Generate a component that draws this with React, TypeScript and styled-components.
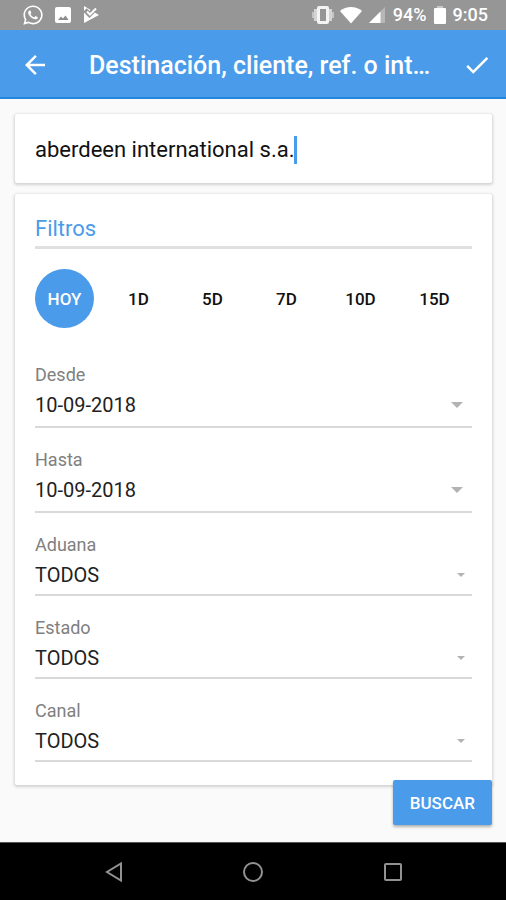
import React, { useState } from "react";
import styled, { createGlobalStyle } from "styled-components";
import { FaWhatsapp } from "react-icons/fa";
import { MdArrowBack, MdCheck } from "react-icons/md";

const BLUE = "#4a9bea";

const GlobalStyle = createGlobalStyle`
  *, *::before, *::after { box-sizing: border-box; }
  body { margin: 0; background: #fafafa; font-family: Roboto, "Noto Sans", sans-serif; }
  button, input, select { font: inherit; color: inherit; margin: 0; padding: 0; border: 0; background: none; outline: none; }
  button { cursor: pointer; }
  svg { display: block; flex: none; }
`;

const Screen = styled.div`
  display: flex;
  flex-direction: column;
  min-height: 100vh;
`;

const StatusBar = styled.div`
  display: flex;
  align-items: center;
  justify-content: space-between;
  height: 30px;
  padding: 0 18px 0 22px;
  background: #969696;
  color: #fff;
  font-size: 18px;
  font-weight: 500;
`;

const StatusGroup = styled.div<{ $gap: number }>`
  display: flex;
  align-items: center;
  gap: ${(p) => p.$gap}px;
`;

const StatusText = styled.span`
  line-height: 32px;
`;

const AppBar = styled.header`
  display: flex;
  align-items: center;
  height: 69px;
  padding: 2px 14px 0 20px;
  background: ${BLUE};
  border-bottom: 2px solid #2288dc;
  color: #fff;
`;

const Title = styled.h1`
  flex: 1;
  min-width: 0;
  margin: 0 24px 0 39px;
  padding-top: 2px;
  overflow: hidden;
  white-space: nowrap;
  text-overflow: ellipsis;
  font-size: 25px;
  font-weight: 500;
  line-height: 36px;
`;

const IconButton = styled.button`
  display: flex;
  font-size: 30px;
  color: #fff;
`;

const Content = styled.main`
  display: flex;
  flex: 1;
  flex-direction: column;
  gap: 11px;
  padding: 15px 14px 16px 15px;
`;

const Card = styled.section`
  padding: 0 20px;
  background: #fff;
  border-radius: 2px;
  box-shadow: 0 1px 3px 1px rgba(0, 0, 0, 0.16);
`;

const SearchBox = styled.label`
  display: flex;
  align-items: center;
  height: 69px;
  padding-top: 2px;
`;

const SearchInput = styled.input`
  field-sizing: content;
  min-width: 1px;
  max-width: 100%;
  font-size: 22px;
  line-height: 32px;
  color: #111;
  caret-color: transparent;
`;

const Caret = styled.span`
  width: 3px;
  height: 28px;
  background: ${BLUE};
`;

const CardTitle = styled.h2`
  margin: 0 0 20px;
  padding: 19px 0 1px;
  border-bottom: 3px solid #e0e0e0;
  color: ${BLUE};
  font-size: 22px;
  font-weight: 400;
  line-height: 32px;
`;

const Days = styled.div`
  display: flex;
  gap: 15px;
  margin-bottom: 35px;
`;

const DayButton = styled.button<{ $active: boolean }>`
  width: 59px;
  height: 59px;
  border-radius: 50%;
  background: ${(p) => (p.$active ? BLUE : "transparent")};
  color: ${(p) => (p.$active ? "#fff" : "#111")};
  font-size: 17px;
  font-weight: 500;
`;

const Fields = styled.div`
  display: flex;
  flex-direction: column;
  gap: 20px;
  padding-bottom: 23px;
`;

const Field = styled.label<{ $date: boolean }>`
  display: grid;
  row-gap: 6px;
  align-items: center;
  padding-bottom: ${(p) => (p.$date ? 9 : 7)}px;
  border-bottom: 2px solid #d9d9d9;

  svg {
    grid-area: 2 / 1;
    justify-self: end;
    margin-right: ${(p) => (p.$date ? 9 : 7)}px;
    pointer-events: none;
  }
`;

const FieldName = styled.span`
  color: #808080;
  font-size: 18px;
  line-height: 24px;
`;

const FieldSelect = styled.select`
  grid-area: 2 / 1;
  width: 100%;
  height: 24px;
  appearance: none;
  color: #222;
  font-size: 20px;
  line-height: 24px;
`;

const SearchButton = styled.button`
  align-self: flex-end;
  height: 45px;
  margin-top: -16px;
  padding: 0 17px;
  border-radius: 2px;
  background: ${BLUE};
  box-shadow: 0 2px 3px rgba(0, 0, 0, 0.3);
  color: #fff;
  font-size: 17px;
  font-weight: 500;
`;

const NavBar = styled.nav`
  display: flex;
  align-items: center;
  justify-content: space-between;
  height: 58px;
  padding: 0 104px;
  background: #000;
  border-top: 1px solid #555;
`;

const NavButton = styled.button`
  display: flex;
`;

const VibrateIcon = () => (
  <svg width="22" height="20" viewBox="0 0 22 20">
    <path d="M1 7v6M21 7v6" stroke="#c4c4c4" strokeWidth="2" />
    <path d="M3.500 4v12M18.500 4v12" stroke="#d4d4d4" strokeWidth="3" />
    <path
      fillRule="evenodd"
      d="M7 1h8A2 2 0 0 1 17 3v14a2 2 0 0 1-2 2H7a2 2 0 0 1-2-2V3a2 2 0 0 1 2-2ZM8 4v12h6V4Z"
      fill="#f4f4f4"
    />
  </svg>
);

const PictureIcon = () => (
  <svg width="16" height="16" viewBox="0 0 16 16">
    <rect width="16" height="16" rx="2" fill="#fff" />
    <path d="M3 13 6 9.500 8 11.500 10.500 8.500 13.500 13Z" fill="#8c8c8c" />
  </svg>
);

const PlayCheckIcon = () => (
  <svg width="18" height="18" viewBox="0 0 18 18">
    <path d="M2 0 17 9 2 17Z" fill="#fff" />
    <path d="M3 4 7.500 8.500 14 2" fill="none" stroke="#969696" strokeWidth="5" />
    <path d="M5 5.500 8 8.500 14 2.500" fill="none" stroke="#fff" strokeWidth="2" />
  </svg>
);

const WifiIcon = () => (
  <svg width="22" height="18" viewBox="0 0 22 18">
    <path d="M0 5C6-.2 16-.2 22 5L11 17.500Z" fill="#fff" />
  </svg>
);

const SignalIcon = () => (
  <svg width="18" height="17" viewBox="0 0 18 17">
    <path d="M17 0V16H1Z" fill="#b7b7b7" />
    <path d="M12.500 4.500V16H1Z" fill="#fff" />
  </svg>
);

const BatteryIcon = () => (
  <svg width="12" height="18" viewBox="0 0 12 18">
    <path d="M3.500 0h5v2H11a1 1 0 0 1 1 1v14a1 1 0 0 1-1 1H1a1 1 0 0 1-1-1V3a1 1 0 0 1 1-1h2.500Z" fill="#fff" />
    <path d="M3.500 0h5v2h-5Z" fill="#c8c8c8" />
  </svg>
);

const ArrowIcon = ({ width }: { width: number }) => (
  <svg width={width} height={width / 2} viewBox="0 0 12 6">
    <path d="M0 0H12L6 6Z" fill="#b3b3b3" />
  </svg>
);

const days = ["HOY", "1D", "5D", "7D", "10D", "15D"];

const fields = [
  { name: "Desde", value: "10-09-2018", date: true },
  { name: "Hasta", value: "10-09-2018", date: true },
  { name: "Aduana", value: "TODOS", date: false },
  { name: "Estado", value: "TODOS", date: false },
  { name: "Canal", value: "TODOS", date: false },
];

export default function App() {
  const [query, setQuery] = useState("aberdeen international s.a.");
  const [day, setDay] = useState("HOY");

  return (
    <Screen>
      <GlobalStyle />
      <StatusBar>
        <StatusGroup $gap={11}>
          <FaWhatsapp size={22} />
          <PictureIcon />
          <PlayCheckIcon />
        </StatusGroup>
        <StatusGroup $gap={7}>
          <StatusGroup $gap={6}>
            <VibrateIcon />
            <WifiIcon />
            <SignalIcon />
          </StatusGroup>
          <StatusText>94%</StatusText>
          <BatteryIcon />
          <StatusText>9:05</StatusText>
        </StatusGroup>
      </StatusBar>
      <AppBar>
        <IconButton aria-label="Volver">
          <MdArrowBack />
        </IconButton>
        <Title>Destinación, cliente, ref. o int…</Title>
        <IconButton aria-label="Aceptar">
          <MdCheck />
        </IconButton>
      </AppBar>
      <Content>
        <Card>
          <SearchBox>
            <SearchInput
              type="text"
              aria-label="Destinación, cliente, referencia"
              value={query}
              onChange={(e) => setQuery(e.target.value)}
            />
            <Caret />
          </SearchBox>
        </Card>
        <Card>
          <CardTitle>Filtros</CardTitle>
          <Days>
            {days.map((d) => (
              <DayButton key={d} $active={d === day} aria-pressed={d === day} onClick={() => setDay(d)}>
                {d}
              </DayButton>
            ))}
          </Days>
          <Fields>
            {fields.map((f) => (
              <Field key={f.name} $date={f.date}>
                <FieldName>{f.name}</FieldName>
                <FieldSelect defaultValue={f.value}>
                  <option>{f.value}</option>
                </FieldSelect>
                <ArrowIcon width={f.date ? 12 : 8} />
              </Field>
            ))}
          </Fields>
        </Card>
        <SearchButton>BUSCAR</SearchButton>
      </Content>
      <NavBar>
        <NavButton aria-label="Atrás">
          <svg width="18" height="20" viewBox="0 0 18 20">
            <path d="M17 1.500V18.500L3 10Z" fill="none" stroke="#929292" strokeWidth="2" />
          </svg>
        </NavButton>
        <NavButton aria-label="Inicio">
          <svg width="20" height="20" viewBox="0 0 20 20">
            <circle cx="10" cy="10" r="9" fill="none" stroke="#929292" strokeWidth="2" />
          </svg>
        </NavButton>
        <NavButton aria-label="Recientes">
          <svg width="18" height="18" viewBox="0 0 18 18">
            <rect x="1" y="1" width="16" height="16" rx="1" fill="none" stroke="#929292" strokeWidth="2" />
          </svg>
        </NavButton>
      </NavBar>
    </Screen>
  );
}
